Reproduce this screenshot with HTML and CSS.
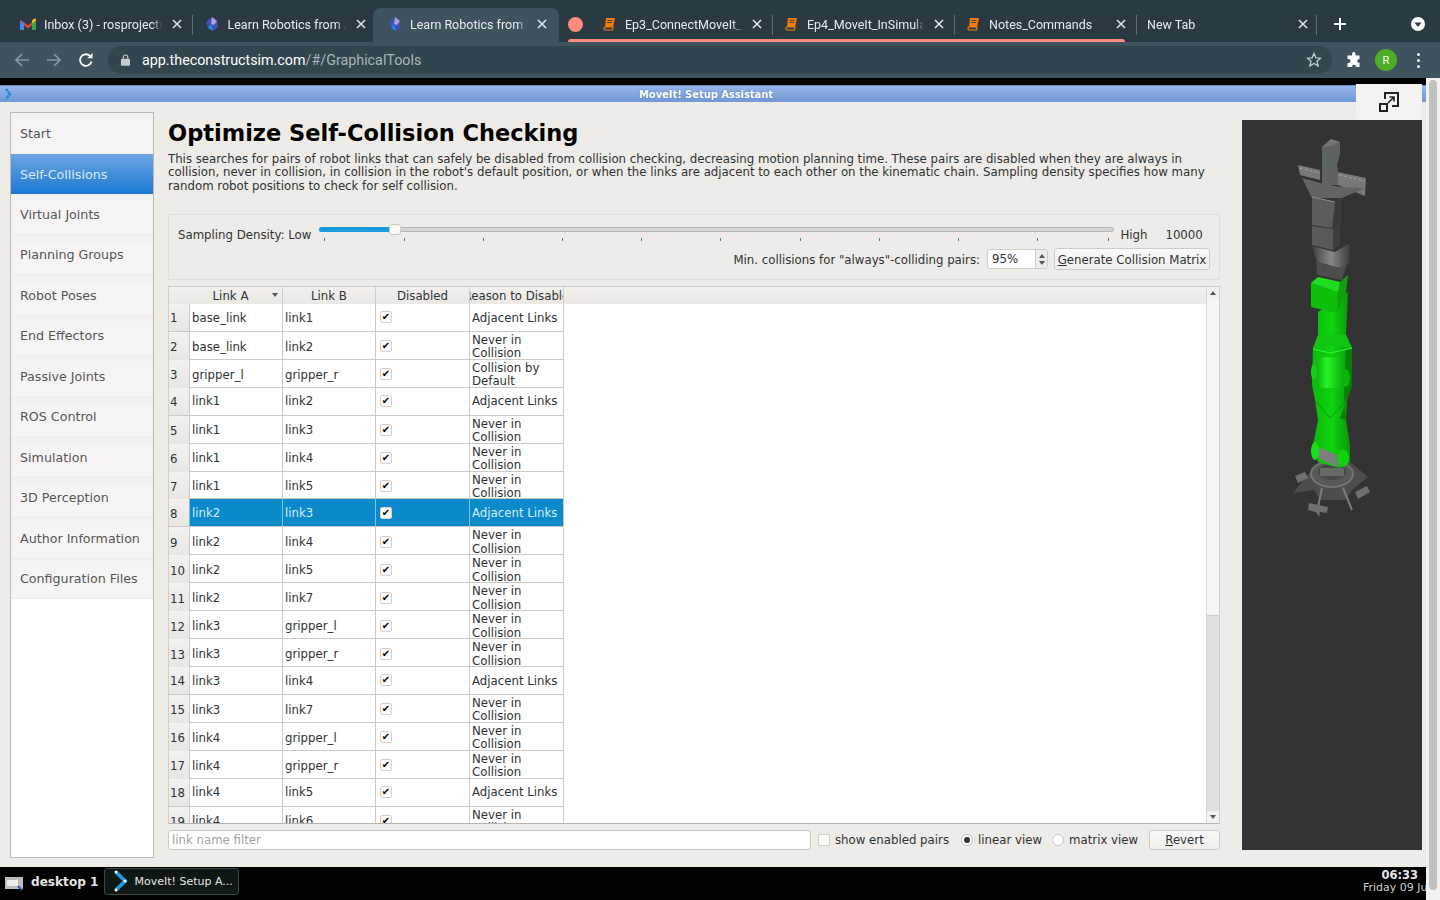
FILE: index.html
```html
<!DOCTYPE html>
<html lang="en">
<head>
    <meta charset="UTF-8">
    <title>MoveIt! Setup Assistant</title>
    <link rel="stylesheet" href="styles.css">
</head>
<body>
    <svg class="defs" width="0" height="0">
        <symbol id="close" viewBox="0 0 10 10"><path d="M1 1l8 8M9 1l-8 8" stroke="#e8eaed" stroke-width="1.5" fill="none"/></symbol>
        <symbol id="book" viewBox="0 0 14 14"><path d="M4 1h9l-2 9H3z" fill="#f57c00"/><path d="M3 10h8l-.5 3H3a1.6 1.6 0 0 1 0-3z" fill="none" stroke="#f57c00" stroke-width="1.2"/><path d="M5.5 3.5h5M5 5.5h5" stroke="#2b3a42" stroke-width=".8"/></symbol>
        <symbol id="robo" viewBox="0 0 16 16"><path d="M8 1l5 4 1 6-5 4-5-3-2-6z" fill="#3f51b5"/><path d="M8 1l5 4-3 4-3-1z" fill="#b39ddb"/><path d="M4 12l3-4 2 7z" fill="#1e88e5"/></symbol>
    </svg>

    <div class="tabstrip">
        <div class="tab first">
            <svg class="tabicon" viewBox="0 0 16 12"><path d="M1 2l7 5.5L15 2v3L8 10.5 1 5z" fill="#ea4335"/><path d="M0 2.5L4 5.5V12H1a1 1 0 0 1-1-1z" fill="#4285f4"/><path d="M16 2.5L12 5.5V12h3a1 1 0 0 0 1-1z" fill="#34a853"/><path d="M12 2.5l2.2-1.8A1.1 1.1 0 0 1 16 1.6v1L12 5.5z" fill="#fbbc04"/></svg>
            <span class="tabtitle">Inbox (3) - rosprojects@gmail.com</span>
            <svg class="tabclose"><use href="#close"/></svg>
        </div>
        <div class="tab second">
            <svg class="tabicon"><use href="#robo"/></svg>
            <span class="tabtitle">Learn Robotics from Zero</span>
            <svg class="tabclose"><use href="#close"/></svg>
        </div>
        <div class="tab active">
            <svg class="tabicon"><use href="#robo"/></svg>
            <span class="tabtitle">Learn Robotics from Zero</span>
            <svg class="tabclose"><use href="#close"/></svg>
        </div>
        <div class="group">
            <span class="groupdot"></span>
            <span class="groupline"></span>
            <div class="tab">
                <svg class="tabicon book"><use href="#book"/></svg>
                <span class="tabtitle">Ep3_ConnectMoveIt_ToRobot</span>
                <svg class="tabclose"><use href="#close"/></svg>
            </div>
            <div class="tab">
                <svg class="tabicon book"><use href="#book"/></svg>
                <span class="tabtitle">Ep4_MoveIt_InSimulation</span>
                <svg class="tabclose"><use href="#close"/></svg>
            </div>
            <div class="tab">
                <svg class="tabicon book"><use href="#book"/></svg>
                <span class="tabtitle">Notes_Commands</span>
                <svg class="tabclose"><use href="#close"/></svg>
            </div>
        </div>
        <div class="tab newtab">
            <span class="tabtitle">New Tab</span>
            <svg class="tabclose"><use href="#close"/></svg>
        </div>
        <svg class="plus" viewBox="0 0 14 14"><path d="M7 1v12M1 7h12" stroke="#fff" stroke-width="2"/></svg>
        <svg class="tabsearch" viewBox="0 0 14 14"><circle cx="7" cy="7" r="7" fill="#fff"/><path d="M3.5 5.5h7L7 10z" fill="#2b3a42"/></svg>
    </div>

    <div class="toolbar">
        <svg class="navicon" viewBox="0 0 16 16"><path d="M15 8H2M8 2L2 8l6 6" stroke="#8b979e" stroke-width="1.7" fill="none"/></svg>
        <svg class="navicon" viewBox="0 0 16 16"><path d="M1 8h13M8 2l6 6-6 6" stroke="#8b979e" stroke-width="1.7" fill="none"/></svg>
        <svg class="navicon" viewBox="0 0 16 16"><path d="M13.5 9.5A5.8 5.8 0 1 1 12 4" stroke="#fff" stroke-width="1.8" fill="none"/><path d="M9.2 6.2h5.3V1z" fill="#fff"/></svg>
        <div class="omnibox">
            <svg class="lock" viewBox="0 0 10 13"><path d="M2.5 5V3.5a2.5 2.5 0 0 1 5 0V5" stroke="#c4cacd" stroke-width="1.2" fill="none"/><rect y="5" width="10" height="8" rx="1" fill="#c4cacd"/></svg>
            <span class="host">app.theconstructsim.com</span><span class="urlpath">/#/GraphicalTools</span>
            <svg class="star" viewBox="0 0 16 16"><path d="M8 1.5l1.9 4.3 4.6.4-3.5 3 1.1 4.6L8 11.4l-4.1 2.4 1.1-4.6-3.5-3 4.6-.4z" stroke="#c4cacd" stroke-width="1.3" fill="none"/></svg>
        </div>
        <svg class="puzzle" viewBox="0 0 16 16"><path d="M6 1.5a1.8 1.8 0 0 1 3.5 0V3.5h4v3.7h-1a1.9 1.9 0 0 0 0 3.6h1V15H9.8v-1a1.9 1.9 0 0 0-3.6 0v1H1.5v-4h1a2 2 0 0 0 0-4h-1V3.5H6z" fill="#fff"/></svg>
        <span class="avatar">R</span>
        <span class="kebab"><i></i><i></i><i></i></span>
    </div>

    <div class="screen">
        <div class="desktop">
            <div class="titlebar">
                <svg class="titleicon" viewBox="0 0 8 12"><path d="M1 1l4 5-4 5" stroke="#1c86d8" stroke-width="2.4" stroke-dasharray="2.2 .8" fill="none"/></svg>
                <span>MoveIt! Setup Assistant</span>
            </div>
            <button class="popout">
                <svg viewBox="0 0 20 20"><path d="M6 7V1h13v13h-6" stroke="#222" stroke-width="2" fill="none"/><rect x="1" y="12" width="7" height="7" stroke="#222" stroke-width="2" fill="none"/><path d="M9 11l6-6M10.5 5H15v4.5" stroke="#222" stroke-width="1.6" fill="none"/></svg>
            </button>

            <div class="app">
                <nav class="sidebar">
                    <div class="navitem">Start</div>
                    <div class="navitem current">Self-Collisions</div>
                    <div class="navitem">Virtual Joints</div>
                    <div class="navitem">Planning Groups</div>
                    <div class="navitem">Robot Poses</div>
                    <div class="navitem">End Effectors</div>
                    <div class="navitem">Passive Joints</div>
                    <div class="navitem">ROS Control</div>
                    <div class="navitem">Simulation</div>
                    <div class="navitem">3D Perception</div>
                    <div class="navitem">Author Information</div>
                    <div class="navitem">Configuration Files</div>
                </nav>

                <main class="main">
                    <h1>Optimize Self-Collision Checking</h1>
                    <p class="desc">This searches for pairs of robot links that can safely be disabled from collision checking, decreasing motion planning time. These pairs are disabled when they are always in collision, never in collision, in collision in the robot's default position, or when the links are adjacent to each other on the kinematic chain. Sampling density specifies how many random robot positions to check for self collision.</p>

                    <section class="groupbox">
                        <div class="density">
                            <span>Sampling Density: Low</span>
                            <div class="slider">
                                <div class="groove"><div class="fill"></div></div>
                                <div class="handle"></div>
                                <div class="ticks"><i></i><i></i><i></i><i></i><i></i><i></i><i></i><i></i><i></i><i></i><i class="lasttick"></i></div>
                            </div>
                            <span class="high">High</span>
                            <span class="samples">10000</span>
                        </div>
                        <div class="minrow">
                            <span>Min. collisions for "always"-colliding pairs:</span>
                            <div class="spin">
                                <span class="spinval">95%</span>
                                <span class="spinbtns"><i class="up"></i><i class="down"></i></span>
                            </div>
                            <button class="btn generate"><u>G</u>enerate Collision Matrix</button>
                        </div>
                    </section>

                    <section class="tablebox">
                        <div class="tablearea">
                            <div class="hdr">
                                <div></div>
                                <div class="hcell sorted">Link A<i class="sort"></i></div>
                                <div class="hcell">Link B</div>
                                <div class="hcell">Disabled</div>
                                <div class="hcell">Reason to Disable</div>
                            </div>
                            <div class="rows">
                                <div class="row"><div class="num">1</div><div class="cell">base_link</div><div class="cell">link1</div><div class="cell"><span class="cb"></span></div><div class="cell">Adjacent Links</div></div>
                                <div class="row"><div class="num">2</div><div class="cell">base_link</div><div class="cell">link2</div><div class="cell"><span class="cb"></span></div><div class="cell">Never in Collision</div></div>
                                <div class="row"><div class="num">3</div><div class="cell">gripper_l</div><div class="cell">gripper_r</div><div class="cell"><span class="cb"></span></div><div class="cell">Collision by Default</div></div>
                                <div class="row"><div class="num">4</div><div class="cell">link1</div><div class="cell">link2</div><div class="cell"><span class="cb"></span></div><div class="cell">Adjacent Links</div></div>
                                <div class="row"><div class="num">5</div><div class="cell">link1</div><div class="cell">link3</div><div class="cell"><span class="cb"></span></div><div class="cell">Never in Collision</div></div>
                                <div class="row"><div class="num">6</div><div class="cell">link1</div><div class="cell">link4</div><div class="cell"><span class="cb"></span></div><div class="cell">Never in Collision</div></div>
                                <div class="row"><div class="num">7</div><div class="cell">link1</div><div class="cell">link5</div><div class="cell"><span class="cb"></span></div><div class="cell">Never in Collision</div></div>
                                <div class="row selected"><div class="num">8</div><div class="cell">link2</div><div class="cell">link3</div><div class="cell"><span class="cb"></span></div><div class="cell">Adjacent Links</div></div>
                                <div class="row"><div class="num">9</div><div class="cell">link2</div><div class="cell">link4</div><div class="cell"><span class="cb"></span></div><div class="cell">Never in Collision</div></div>
                                <div class="row"><div class="num">10</div><div class="cell">link2</div><div class="cell">link5</div><div class="cell"><span class="cb"></span></div><div class="cell">Never in Collision</div></div>
                                <div class="row"><div class="num">11</div><div class="cell">link2</div><div class="cell">link7</div><div class="cell"><span class="cb"></span></div><div class="cell">Never in Collision</div></div>
                                <div class="row"><div class="num">12</div><div class="cell">link3</div><div class="cell">gripper_l</div><div class="cell"><span class="cb"></span></div><div class="cell">Never in Collision</div></div>
                                <div class="row"><div class="num">13</div><div class="cell">link3</div><div class="cell">gripper_r</div><div class="cell"><span class="cb"></span></div><div class="cell">Never in Collision</div></div>
                                <div class="row"><div class="num">14</div><div class="cell">link3</div><div class="cell">link4</div><div class="cell"><span class="cb"></span></div><div class="cell">Adjacent Links</div></div>
                                <div class="row"><div class="num">15</div><div class="cell">link3</div><div class="cell">link7</div><div class="cell"><span class="cb"></span></div><div class="cell">Never in Collision</div></div>
                                <div class="row"><div class="num">16</div><div class="cell">link4</div><div class="cell">gripper_l</div><div class="cell"><span class="cb"></span></div><div class="cell">Never in Collision</div></div>
                                <div class="row"><div class="num">17</div><div class="cell">link4</div><div class="cell">gripper_r</div><div class="cell"><span class="cb"></span></div><div class="cell">Never in Collision</div></div>
                                <div class="row"><div class="num">18</div><div class="cell">link4</div><div class="cell">link5</div><div class="cell"><span class="cb"></span></div><div class="cell">Adjacent Links</div></div>
                                <div class="row"><div class="num">19</div><div class="cell">link4</div><div class="cell">link6</div><div class="cell"><span class="cb"></span></div><div class="cell">Never in Collision</div></div>
                            </div>
                        </div>
                        <div class="vscroll">
                            <span class="arrow"><i class="up"></i></span>
                            <span class="vthumb"></span>
                            <span class="vtrough"></span>
                            <span class="arrow"><i class="down"></i></span>
                        </div>
                    </section>

                    <div class="filterrow">
                        <div class="filter">link name filter</div>
                        <span class="check"></span><span class="checklabel">show enabled pairs</span>
                        <span class="radio on"></span><span class="radiolabel">linear view</span>
                        <span class="radio"></span><span class="radiolabel">matrix view</span>
                        <button class="btn revert"><u>R</u>evert</button>
                    </div>
                </main>

                <div class="viewer">
                    <svg viewBox="1242 120 180 730" width="180" height="730">
                        <defs>
                            <linearGradient id="cyl" x1="0" x2="1" y1="0" y2="0">
                                <stop offset="0" stop-color="#3c3f3c"/><stop offset=".5" stop-color="#858885"/><stop offset="1" stop-color="#3a3c3a"/>
                            </linearGradient>
                            <linearGradient id="gcyl" x1="0" x2="1" y1="0" y2="0">
                                <stop offset="0" stop-color="#0cb00c"/><stop offset=".4" stop-color="#26f526"/><stop offset="1" stop-color="#0cb00c"/>
                            </linearGradient>
                            <linearGradient id="garm" x1="0" x2="1" y1="0" y2="0">
                                <stop offset="0" stop-color="#0bb80b"/><stop offset=".5" stop-color="#0fd40f"/><stop offset="1" stop-color="#089008"/>
                            </linearGradient>
                        </defs>
                        <!-- base -->
                        <path d="M1293 493L1312 470 1350 462 1368 477 1352 490 1345 500 1320 500 1314 490z" fill="#4b4e4b"/>
                        <path d="M1322 488l-5 24M1343 488l9 22" stroke="#7a7d7a" stroke-width="2"/>
                        <path d="M1309 503l19 4-1 6-7-1-1 5-3-5-8-2zM1295 476l10-4 3 6-10 5zM1355 492l12-6 3 6-12 7z" fill="#6d716d"/>
                        <ellipse cx="1332" cy="474" rx="21" ry="13" fill="#565a56" stroke="#70746f" stroke-width="2"/>
                        <ellipse cx="1332" cy="472" rx="14" ry="8" fill="#454845"/>
                        <path d="M1320 468h24v8h-24z" fill="#666a66"/>
                        <!-- gripper -->
                        <path d="M1322 147L1331 139 1340 142 1340 155 1337 165 1340 185 1322 185 1322 160z" fill="#5d635d"/>
                        <path d="M1331 139L1340 142 1332 146 1322 147z" fill="#6f756f"/>
                        <path d="M1298 165L1320 170 1320 180 1300 175zM1338 172L1366 178 1365 196 1338 185z" fill="#747a74"/>
                        <path d="M1300 168l20 5M1339 175l26 6" stroke="#92978f" stroke-width="1.5" stroke-dasharray="3 2"/>
                        <path d="M1302 178L1320 183 1340 187 1365 188 1342 198 1312 198z" fill="#5f655f"/>
                        <path d="M1312 197L1335 202 1342 198 1342 220 1332 228 1312 225z" fill="#595e59"/>
                        <path d="M1335 202L1342 198 1342 220 1332 228z" fill="#383b38"/>
                        <path d="M1312 197L1335 202" stroke="#8a8e8a"/>
                        <path d="M1312 226L1333 229 1340 223 1340 243 1333 250 1312 245z" fill="#565b56"/>
                        <path d="M1333 229L1340 223 1340 243 1333 250z" fill="#3c3f3c"/>
                        <path d="M1312 246L1335 252 1350 243 1350 263 1340 268 1317 262z" fill="url(#cyl)"/>
                        <path d="M1316 262L1340 268 1347 263 1342 280 1317 275z" fill="#4b4f4b"/>
                        <!-- arm -->
                        <path d="M1318 312L1348 292 1346 335 1352 348 1352 385 1347 400 1346 420 1350 445 1350 462 1340 468 1318 462 1313 445 1318 420 1315 400 1312 385 1313 348 1318 335z" fill="url(#garm)"/>
                        <path d="M1346 350L1352 348 1352 385 1347 400 1340 418 1346 420 1344 395z" fill="#077f07"/>
                        <path d="M1313 349L1330 345 1352 348 1346 335 1318 335z" fill="#11c611"/>
                        <path d="M1313 349L1330 353 1352 348" stroke="#2bff2b" fill="none"/>
                        <path d="M1315 400L1330 418 1347 400" stroke="#0a9a0a" fill="none"/>
                        <rect x="1316" y="357" width="27" height="31" rx="9" fill="url(#gcyl)"/>
                        <ellipse cx="1314" cy="372" rx="3" ry="8" fill="#12d012"/>
                        <ellipse cx="1346" cy="378" rx="4" ry="9" fill="#0cb40c"/>
                        <path d="M1318 447L1340 456 1338 467 1318 458z" fill="#7b7f7b"/>
                        <ellipse cx="1315" cy="451" rx="4" ry="9" fill="#14e014"/>
                        <ellipse cx="1343" cy="458" rx="6" ry="9" fill="#12cf12"/>
                        <!-- green box -->
                        <path d="M1311 283L1318 277 1340 282 1348 275 1346 293 1337 313 1338 292z" fill="#119f11"/>
                        <path d="M1311 283L1338 292 1337 313 1311 307z" fill="#0cc00c"/>
                        <path d="M1311 283L1318 277 1340 282 1338 292z" fill="#1ddd1d"/>
                    </svg>
                </div>
            </div>

            <div class="taskbar">
                <svg class="deskicon" viewBox="0 0 18 14"><rect width="18" height="12" fill="#b8bcbc"/><rect x="2" y="3" width="11" height="6" fill="#eceeee"/><path d="M13 9l4 4" stroke="#2a5db0" stroke-width="2"/></svg>
                <span class="deskname">desktop 1</span>
                <div class="winbtn">
                    <svg viewBox="0 0 14 22"><path d="M2 2l9 9-9 9" stroke="#1c9ae0" stroke-width="3.8" fill="none"/><circle cx="2" cy="2" r="1.5" fill="#fff"/><circle cx="11" cy="11" r="1.5" fill="#fff"/><circle cx="2" cy="20" r="1.5" fill="#fff"/></svg>
                    <span>MoveIt! Setup A...</span>
                </div>
                <div class="clock">
                    <div class="time">06:33</div>
                    <div class="date">Friday 09 July 2021</div>
                </div>
            </div>
        </div>
        <div class="pagescroll"><span></span></div>
    </div>
</body>
</html>
```
FILE: styles.css
```css
* { box-sizing: border-box; }

html, body {
    margin: 0;
    height: 100%;
    overflow: hidden;
}
body {
    display: flex;
    flex-direction: column;
    height: 900px;
    font-family: "DejaVu Sans", sans-serif;
    font-size: 12.67px;
    color: #2e3436;
    background: #000;
}
.defs { position: absolute; }

/* browser chrome */
.tabstrip {
    display: flex;
    align-items: flex-end;
    height: 42px;
    background: #2b3a42;
    padding-left: 10px;
    font-family: Roboto, sans-serif;
    font-size: 12.5px;
    color: #e8eaed;
    flex: none;
}
.tab {
    position: relative;
    display: flex;
    align-items: center;
    width: 182px;
    height: 34px;
    padding: 0 9px 2px 13px;
}
.tab::after {
    content: "";
    position: absolute;
    right: -1.5px;
    top: 7px;
    height: 20px;
    width: 1px;
    background: #5d6d75;
}
.tab.first { width: 181.5px; padding-left: 10px; padding-right: 10px; }
.tab.second { width: 181.5px; padding-left: 12px; padding-right: 7px; }
.tab.second::after { display: none; }
.tab.active {
    width: 186px;
    padding-left: 14px;
    padding-right: 12px;
    background: #3f535e;
    border-radius: 8px 8px 0 0;
}
.tab.active::after { display: none; }
.tabicon {
    flex: none;
    width: 16px;
    height: 16px;
    margin-right: 8px;
}
.active .tabicon { margin-right: 7px; }
.tabicon.book { width: 14px; height: 14px; margin-right: 9px; }
.tabtitle {
    flex: 1;
    overflow: hidden;
    white-space: nowrap;
    -webkit-mask-image: linear-gradient(to right, #000 92%, transparent);
    mask-image: linear-gradient(to right, #000 92%, transparent);
}
.tabclose { flex: none; width: 10px; height: 10px; margin-left: 10px; }
.group {
    position: relative;
    display: flex;
    padding-left: 30px;
}
.groupdot {
    position: absolute;
    left: 9px;
    top: 9px;
    width: 15px;
    height: 15px;
    border-radius: 50%;
    background: #ff8a80;
}
.groupline {
    position: absolute;
    left: 9px;
    bottom: 0;
    width: 557px;
    height: 3px;
    border-radius: 3px 3px 0 0;
    background: #ff8a80;
}
.newtab { width: 181.5px; padding-left: 12px; }
.newtab::after { right: 0; }
.plus { width: 14px; height: 14px; margin: 0 0 11px 16px; flex: none; }
.tabsearch { width: 14px; height: 14px; margin: 0 0 11px 64px; flex: none; }

.toolbar {
    display: flex;
    align-items: center;
    height: 36px;
    padding-left: 14px;
    background: #3f535e;
    flex: none;
}
.navicon { width: 16px; height: 16px; margin-right: 16px; flex: none; }
.omnibox {
    display: flex;
    align-items: center;
    width: 1224px;
    height: 28px;
    margin-left: -2px;
    padding: 0 10px 0 13px;
    border-radius: 14px;
    background: #33454e;
    font-family: Roboto, sans-serif;
    font-size: 14.3px;
    flex: none;
}
.lock { width: 9px; height: 12px; margin-right: 12px; }
.host { color: #fff; }
.urlpath { color: #aab4b9; }
.star { width: 16px; height: 16px; margin-left: auto; }
.puzzle { width: 16px; height: 16px; margin-left: 14px; flex: none; }
.avatar {
    display: flex;
    align-items: center;
    justify-content: center;
    width: 22px;
    height: 22px;
    margin-left: 13px;
    border-radius: 50%;
    background: #4caf25;
    color: #fff;
    font-family: Roboto, sans-serif;
    font-size: 11px;
    flex: none;
}
.kebab {
    display: flex;
    flex-direction: column;
    gap: 3px;
    margin-left: 20px;
}
.kebab i { width: 3px; height: 3px; border-radius: 50%; background: #fff; }

.screen { display: flex; flex: 1; min-height: 0; }
.desktop {
    position: relative;
    display: flex;
    flex-direction: column;
    width: 1427px;
    padding-top: 7px;
    background: #000;
}
.pagescroll {
    flex: 1;
    padding: 2px 3px 10px 3px;
    background: #f3f1ef;
}
.pagescroll span {
    display: block;
    width: 8px;
    height: 100%;
    border-radius: 4px;
    background: #c1c1c1;
}

/* qt window */
.titlebar {
    position: relative;
    display: flex;
    align-items: center;
    justify-content: center;
    height: 17px;
    padding-right: 14px;
    background: linear-gradient(#94b5ea, #7099d6);
    border-top: 1px solid #6f8fc4;
    color: #fff;
    font-size: 9.9px;
    font-weight: bold;
    text-shadow: 0 0 2px #4a6da0;
    flex: none;
}
.titleicon { position: absolute; left: 5px; top: 2px; width: 8px; height: 12px; }
.popout {
    position: absolute;
    left: 1356px;
    top: 6px;
    display: flex;
    align-items: center;
    justify-content: center;
    width: 66px;
    height: 36px;
    padding: 0;
    border: 0;
    border-radius: 0 0 4px 4px;
    background: #f5f3f1;
}
.popout svg { width: 20px; height: 20px; }

.app {
    display: flex;
    height: 765px;
    padding: 10px 0 9px 10px;
    background: #efebe6;
    flex: none;
}
.sidebar {
    width: 144px;
    border: 1px solid #bdb8b3;
    background: #fff;
    flex: none;
}
.navitem {
    display: flex;
    align-items: center;
    height: 40.5px;
    padding: 1px 0 0 9px;
    color: #555753;
    background: linear-gradient(#f2f0f0, #f8f4f6 30%);
    border-bottom: 1px solid #f0ecec;
    white-space: nowrap;
}
.navitem.current {
    background: linear-gradient(#6ea5e2, #1a78d2);
    color: #dce9f8;
    border-bottom: 0;
}

.main {
    display: flex;
    flex-direction: column;
    width: 1052px;
    margin-left: 14px;
    font-size: 11.75px;
    white-space: nowrap;
    flex: none;
}
h1 {
    margin: 7px 0 0;
    font-size: 22.5px;
    line-height: 28px;
    color: #000;
}
.desc {
    margin: 5.5px 0 0;
    line-height: 13.5px;
    white-space: normal;
    color: #2e3436;
}

.groupbox {
    height: 66px;
    margin-top: 21px;
    padding: 8px 9px 0 9px;
    border: 1px solid #e2dfda;
    flex: none;
}
.density { display: flex; height: 22px; align-items: center; }
.density > span, .minrow > span { padding-top: 2px; }
.slider {
    position: relative;
    align-self: stretch;
    width: 795px;
    margin-left: 8px;
    padding-top: 4px;
    flex: none;
}
.groove {
    height: 5px;
    border: 1px solid #b8b4ae;
    border-radius: 3px;
    background: #d9d5d0;
}
.fill {
    width: 76px;
    height: 5px;
    margin: -1px;
    border-radius: 3px;
    background: #1a9ae0;
}
.handle {
    position: absolute;
    left: 70px;
    top: 1px;
    width: 12px;
    height: 11px;
    border: 1px solid #cfcac4;
    border-radius: 3px;
    background: #fbfaf9;
}
.ticks { display: flex; margin-top: 6px; padding-left: 5px; }
.ticks i {
    flex: none;
    width: 79.2px;
    height: 3px;
    border-left: 1px solid #2f86b8;
}
.ticks .lasttick { margin-left: -8px; width: 1px; }
.high { margin-left: 6px; }
.samples { margin-left: 18px; }
.minrow {
    display: flex;
    align-items: center;
    justify-content: flex-end;
    height: 22px;
    margin-top: 3px;
}
.spin {
    display: flex;
    width: 61px;
    height: 20px;
    margin-left: 7px;
    border: 1px solid #d0ccc6;
    border-radius: 3px;
    background: #fff;
    flex: none;
}
.spinval { flex: 1; padding-left: 4px; line-height: 19px; }
.spinbtns {
    display: flex;
    flex-direction: column;
    align-items: center;
    justify-content: center;
    gap: 3px;
    width: 12px;
    border-left: 1px solid #d0ccc6;
    background: #efebe6;
}
.up, .down {
    display: block;
    width: 0;
    height: 0;
    border-left: 3.5px solid transparent;
    border-right: 3.5px solid transparent;
}
.up { border-bottom: 4px solid #555; }
.down { border-top: 4px solid #555; }
.btn {
    font: inherit;
    color: #2e3436;
    padding: 0;
    border: 1px solid #cfcbc5;
    border-radius: 3px;
    background: linear-gradient(#fbfafa, #f1eeeb);
    white-space: nowrap;
    flex: none;
}
.generate { width: 156px; height: 22px; margin-left: 6px; padding-top: 1px; }

.tablebox {
    display: flex;
    height: 538px;
    margin-top: 6px;
    border: 1px solid #d2cec8;
    border-bottom-color: #b7b3ad;
    flex: none;
}
.tablearea {
    flex: 1;
    min-width: 0;
    overflow: hidden;
    background: #fff;
}
.hdr, .row {
    display: grid;
    grid-template-columns: 20px 93px 93px 94px 95px;
    width: 395px;
}
.hdr { width: 100%; height: 17px; background: linear-gradient(#f3f0ed, #ece8e3); }
.hcell {
    position: relative;
    display: flex;
    align-items: center;
    justify-content: center;
    overflow: hidden;
    white-space: nowrap;
    border-left: 1px solid #d0ccc7;
}
.hcell:last-child { border-right: 1px solid #d0ccc7; }
.hcell.sorted { padding-right: 10px; border-left: 0; }
.sort {
    position: absolute;
    right: 4px;
    top: 6px;
    border-left: 3.5px solid transparent;
    border-right: 3.5px solid transparent;
    border-top: 4px solid #555;
}
.rows { height: 520px; overflow: hidden; }
.row { height: 27.93px; border-bottom: 1px solid #cdcac6; }
.num {
    display: flex;
    align-items: center;
    padding: 2px 0 0 1px;
    background: linear-gradient(#f4f1f0, #e9e5e3);
}
.cell {
    display: flex;
    align-items: center;
    padding: 2px 2px 0;
    line-height: 13.5px;
    white-space: normal;
    border-left: 1px solid #cdcac6;
}
.cell:last-child { border-right: 1px solid #cdcac6; }
.cb {
    display: flex;
    align-items: center;
    justify-content: center;
    width: 12px;
    height: 12px;
    margin: -2px 0 0 2px;
    border: 1px solid #d4d0ca;
    border-radius: 2px;
    background: #fff;
}
.cb::after {
    content: "\2714";
    font-size: 10px;
    line-height: 1;
    color: #000;
}
.row.selected .cell {
    background: #0a8acb;
    color: #d6ecf8;
    border-left-color: #7cc0e2;
}
.vscroll {
    display: flex;
    flex-direction: column;
    width: 13px;
    border-left: 1px solid #dcd8d3;
    flex: none;
}
.arrow {
    display: flex;
    align-items: center;
    justify-content: center;
    height: 12px;
    background: #f3f1ee;
    flex: none;
}
.vthumb { height: 317px; background: #f7f6f4; border-bottom: 1px solid #d0ccc6; flex: none; }
.vtrough { flex: 1; background: #e2e0dd; }

.filterrow {
    display: flex;
    align-items: center;
    height: 20px;
    margin-top: 6px;
    flex: none;
}
.filter {
    width: 643px;
    height: 20px;
    padding-left: 3px;
    border: 1px solid #c9c5bf;
    border-radius: 3px;
    background: #fff;
    color: #a3a3a3;
    line-height: 18px;
    flex: none;
}
.check {
    width: 12px;
    height: 12px;
    margin-left: 7px;
    border: 1px solid #cfcbc5;
    border-radius: 2px;
    background: #fff;
    flex: none;
}
.checklabel { margin-left: 5px; }
.radio {
    display: flex;
    align-items: center;
    justify-content: center;
    width: 12px;
    height: 12px;
    margin-left: 12px;
    border: 1px solid #c9c5bf;
    border-radius: 50%;
    background: #fff;
    flex: none;
}
.radiolabel + .radio { margin-left: 10px; }
.radio.on::after {
    content: "";
    width: 6px;
    height: 6px;
    border-radius: 50%;
    background: #333;
}
.radiolabel { margin-left: 5px; }
.revert { width: 71px; height: 20px; margin-left: auto; }

.viewer {
    width: 180px;
    height: 730px;
    margin: 8px 0 0 22px;
    background: #333;
    overflow: hidden;
    flex: none;
}
.viewer svg { display: block; }

.taskbar {
    display: flex;
    align-items: center;
    height: 33px;
    padding-left: 5px;
    background: #000;
    color: #e6e6e6;
    flex: none;
}
.deskicon { width: 18px; height: 14px; flex: none; }
.deskname {
    margin: -4px 0 0 8px;
    font-weight: bold;
    font-size: 12.1px;
    white-space: nowrap;
}
.winbtn {
    display: flex;
    align-items: center;
    width: 135px;
    height: 27px;
    margin: -5px 0 0 6px;
    padding-left: 9px;
    border: 1px solid #3c4a46;
    border-radius: 3px;
    background: #0f1715;
    font-size: 11px;
    white-space: nowrap;
}
.winbtn svg { width: 14px; height: 22px; margin-right: 6px; flex: none; }
.clock {
    align-self: flex-start;
    width: 63px;
    margin-left: auto;
    padding-top: 2px;
    overflow: hidden;
    line-height: 13px;
    white-space: nowrap;
}
.time { padding-right: 8px; text-align: right; font-weight: bold; font-size: 11.5px; }
.date { margin-top: -1px; font-size: 11px; color: #cfcfcf; }
```
